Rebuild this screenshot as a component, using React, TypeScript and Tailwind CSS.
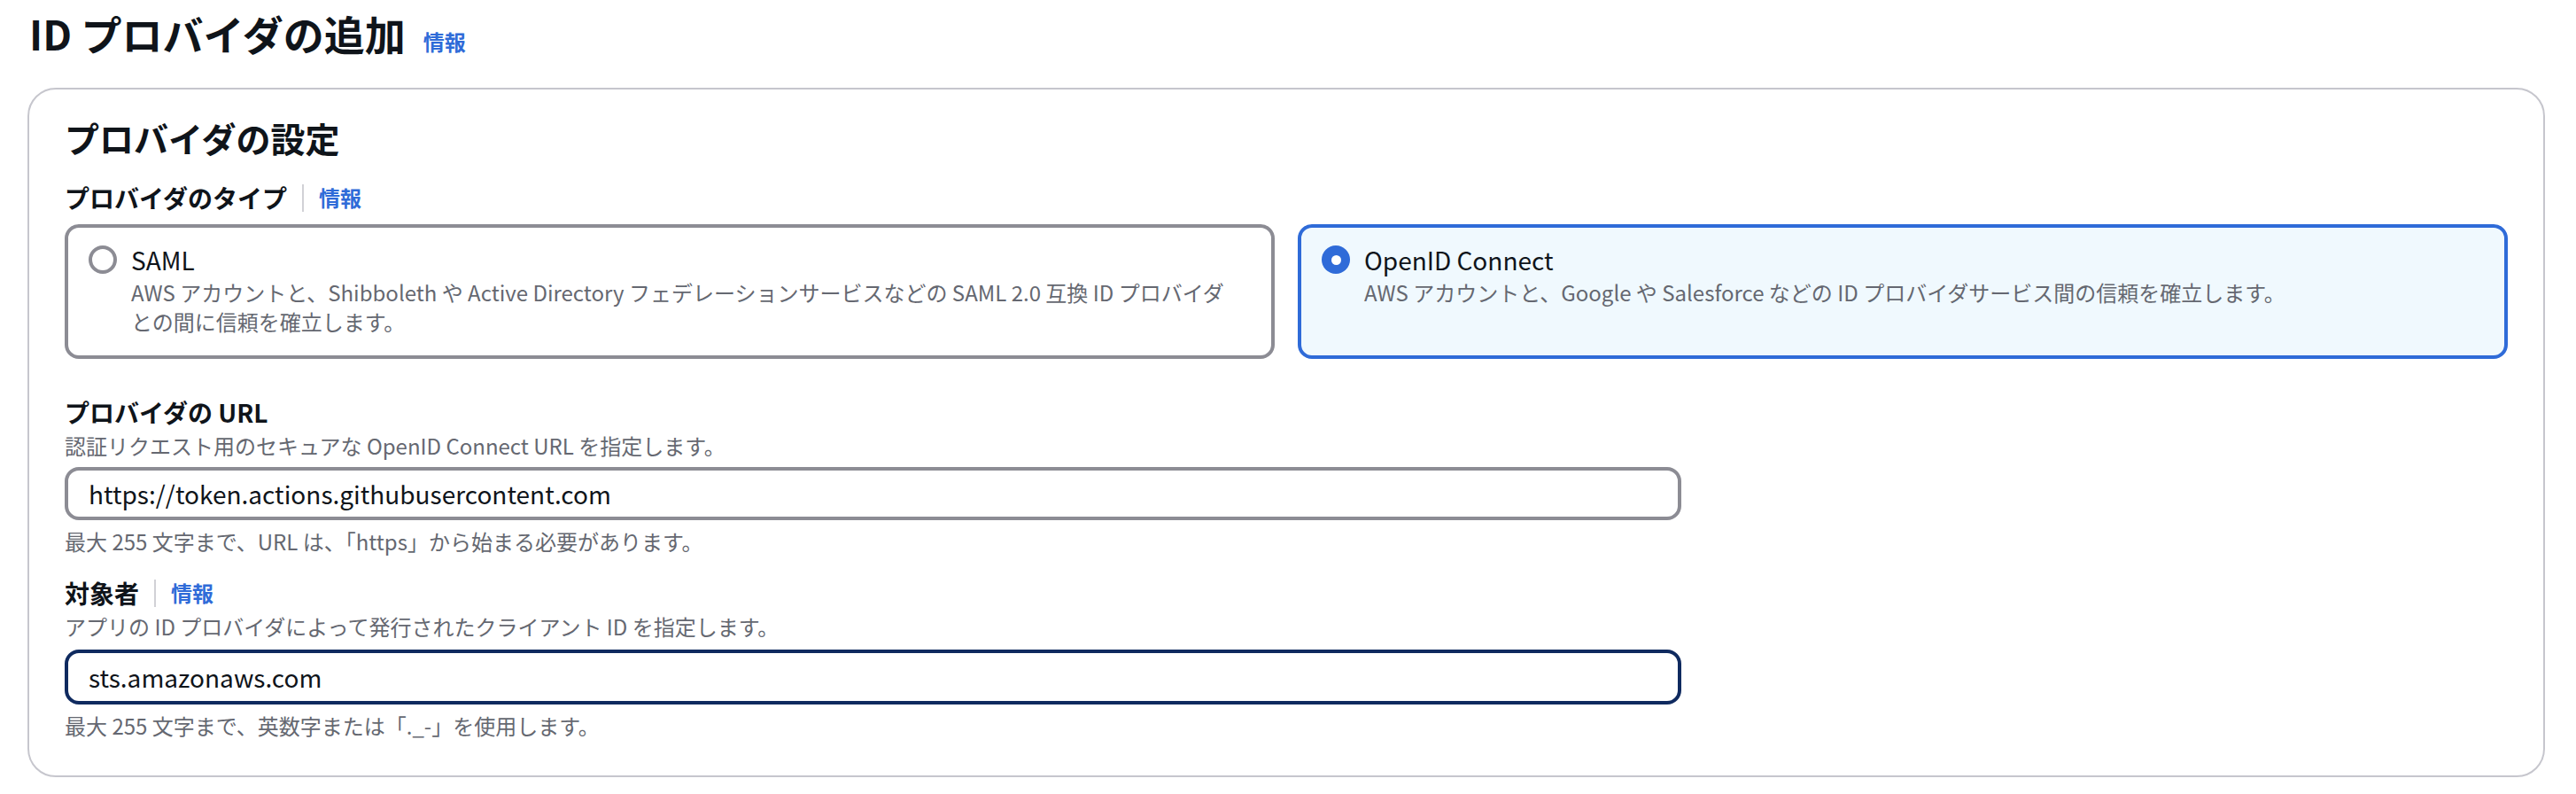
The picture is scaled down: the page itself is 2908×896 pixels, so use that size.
import React from "react";

const FONT = '"Noto Sans CJK JP", "Noto Sans", sans-serif';

function Info() {
  return <span className="text-[24px] leading-[32px] font-bold text-[#2f6bd8]">情報</span>;
}

function Radio({ checked }: { checked: boolean }) {
  if (checked) {
    return (
      <div className="w-8 h-8 rounded-full bg-[#2f6bd8] flex items-center justify-center shrink-0">
        <div className="w-[11px] h-[11px] rounded-full bg-white" />
      </div>
    );
  }
  return <div className="w-8 h-8 rounded-full border-4 border-[#8c8c94] bg-white shrink-0" />;
}

function Tile({
  checked,
  title,
  children,
}: {
  checked: boolean;
  title: string;
  children: React.ReactNode;
}) {
  return (
    <div
      className={
        checked
          ? "border-4 border-[#2f6bd8] bg-[#f0f9fe] rounded-[16px] pl-[23px] pr-[23px] pt-[16px] pb-[22px] flex gap-[16px]"
          : "border-4 border-[#8c8c94] bg-white rounded-[16px] pl-[23px] pr-[23px] pt-[16px] pb-[22px] flex gap-[16px]"
      }
    >
      <div className="h-[40px] flex items-center">
        <Radio checked={checked} />
      </div>
      <div className="flex flex-col">
        <div className="text-[28px] leading-[40px] text-[#0f141a]">{title}</div>
        <div className="text-[24px] leading-[33px] text-[#656871]">{children}</div>
      </div>
    </div>
  );
}

function Field({
  label,
  info,
  desc,
  value,
  focused,
  hint,
  className,
}: {
  label: string;
  info?: boolean;
  desc: string;
  value: string;
  focused?: boolean;
  hint: string;
  className?: string;
}) {
  return (
    <div className={className}>
      <div className="flex items-center h-[40px]">
        <span className="text-[28px] leading-[40px] font-bold text-[#0f141a]">{label}</span>
        {info && (
          <>
            <span className="w-[2px] h-[31px] bg-[#d1d1d6] mx-[17px]" />
            <Info />
          </>
        )}
      </div>
      <div className="text-[24px] leading-[32px] text-[#656871] mt-[2px]">{desc}</div>
      <div
        className={
          focused
            ? "mt-[10px] w-[1825px] h-[62px] border-4 border-[#0f2a5f] rounded-[16px] px-[23px] flex items-center text-[28px] text-[#0f141a]"
            : "mt-[8px] w-[1825px] h-[60px] border-4 border-[#8c8c94] rounded-[16px] px-[23px] flex items-center text-[28px] text-[#0f141a]"
        }
      >
        {value}
      </div>
      <div className="mt-[8px] text-[24px] leading-[32px] text-[#656871]">{hint}</div>
    </div>
  );
}

export default function App() {
  return (
    <div className="w-full h-[896px] bg-white pl-[31px] pr-[35px] pt-[9px]" style={{ fontFamily: FONT }}>
      <div className="flex items-baseline gap-[20px] pl-[2px]">
        <h1 className="text-[46px] leading-[56px] font-bold text-[#0f141a]">ID プロバイダの追加</h1>
        <Info />
      </div>

      <section className="mt-[34px] border-2 border-[#c6c6cd] rounded-[32px] px-[40px] pt-[30px] pb-[40px]">
        <h2 className="text-[39px] leading-[48px] font-bold text-[#0f141a]">プロバイダの設定</h2>

        <div className="mt-[24px] flex items-center h-[40px]">
          <span className="text-[28px] leading-[40px] font-bold text-[#0f141a]">プロバイダのタイプ</span>
          <span className="w-[2px] h-[31px] bg-[#d1d1d6] mx-[17px]" />
          <Info />
        </div>

        <div className="mt-[10px] grid grid-cols-2 gap-[26px]">
          <Tile checked={false} title="SAML">
            AWS アカウントと、Shibboleth や Active Directory フェデレーションサービスなどの SAML 2.0 互換 ID プロバイダ
            <br />
            との間に信頼を確立します。
          </Tile>
          <Tile checked title="OpenID Connect">
            AWS アカウントと、Google や Salesforce などの ID プロバイダサービス間の信頼を確立します。
          </Tile>
        </div>

        <Field
          className="mt-[40px]"
          label="プロバイダの URL"
          desc="認証リクエスト用のセキュアな OpenID Connect URL を指定します。"
          value="https://token.actions.githubusercontent.com"
          hint="最大 255 文字まで、URL は、「https」から始まる必要があります。"
        />

        <Field
          className="mt-[22px]"
          label="対象者"
          info
          desc="アプリの ID プロバイダによって発行されたクライアント ID を指定します。"
          value="sts.amazonaws.com"
          focused
          hint="最大 255 文字まで、英数字または「._-」を使用します。"
        />
      </section>
    </div>
  );
}
